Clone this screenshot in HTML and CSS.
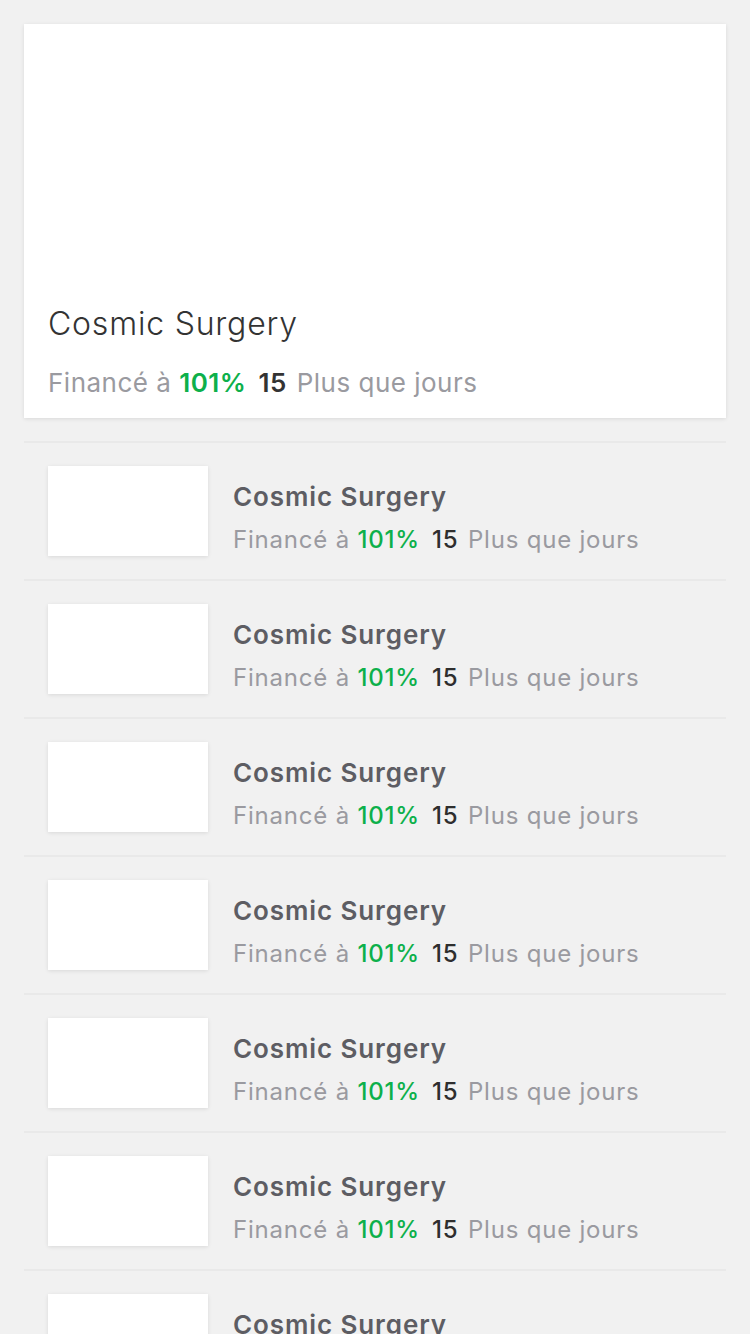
FILE: index.html
```html
<!DOCTYPE html>
<html lang="fr">
<head>
<meta charset="utf-8">
<title>Projets</title>
<link rel="stylesheet" href="styles.css">
</head>
<body>
<main class="page">
  <article class="featured">
    <div class="featured-media"></div>
    <h1 class="featured-title">Cosmic Surgery</h1>
    <p class="meta featured-meta">Financé à <b class="pct">101%</b><b class="days">15</b> Plus que jours</p>
  </article>
  <ul class="list">
    <li class="row"><div class="thumb"></div><div class="info"><h2 class="row-title">Cosmic Surgery</h2><p class="meta">Financé à <b class="pct">101%</b><b class="days">15</b> Plus que jours</p></div></li>
    <li class="row"><div class="thumb"></div><div class="info"><h2 class="row-title">Cosmic Surgery</h2><p class="meta">Financé à <b class="pct">101%</b><b class="days">15</b> Plus que jours</p></div></li>
    <li class="row"><div class="thumb"></div><div class="info"><h2 class="row-title">Cosmic Surgery</h2><p class="meta">Financé à <b class="pct">101%</b><b class="days">15</b> Plus que jours</p></div></li>
    <li class="row"><div class="thumb"></div><div class="info"><h2 class="row-title">Cosmic Surgery</h2><p class="meta">Financé à <b class="pct">101%</b><b class="days">15</b> Plus que jours</p></div></li>
    <li class="row"><div class="thumb"></div><div class="info"><h2 class="row-title">Cosmic Surgery</h2><p class="meta">Financé à <b class="pct">101%</b><b class="days">15</b> Plus que jours</p></div></li>
    <li class="row"><div class="thumb"></div><div class="info"><h2 class="row-title">Cosmic Surgery</h2><p class="meta">Financé à <b class="pct">101%</b><b class="days">15</b> Plus que jours</p></div></li>
    <li class="row"><div class="thumb"></div><div class="info"><h2 class="row-title">Cosmic Surgery</h2><p class="meta">Financé à <b class="pct">101%</b><b class="days">15</b> Plus que jours</p></div></li>
  </ul>
</main>
</body>
</html>
```

FILE: styles.css
```css
* { box-sizing: border-box; }
html, body { margin: 0; padding: 0; }
body {
  background: #f1f1f1;
  font-family: Inter, "Noto Sans", "Liberation Sans", sans-serif;
  width: 750px;
  height: 1334px;
  overflow: hidden;
}
.page { padding: 24px 24px 0; }

.featured {
  background: #fff;
  box-shadow: 0 1px 4px rgba(0,0,0,0.10);
  padding: 0 24px 18px;
}
.featured-media { height: 280px; }
.featured-title {
  margin: 0;
  font-size: 32px;
  line-height: 40px;
  font-weight: 300;
  letter-spacing: 0.8px;
  color: #333;
}
.meta {
  margin: 0;
  color: #9a9aa0;
  font-size: 24px;
  line-height: 32px;
  letter-spacing: 0.8px;
  white-space: nowrap;
}
.featured-meta {
  margin-top: 22px;
  font-size: 26px;
  line-height: 34px;
  letter-spacing: 0.5px;
}
.pct { color: #0db04b; font-weight: 600; }
.days { color: #333; font-weight: 600; margin-left: 12px; margin-right: 2px; }
.info .pct { font-weight: 500; }
.info .days { font-weight: 500; color: #2e2e2e; }

.list { list-style: none; margin: 23px 0 0; padding: 0; }
.row {
  display: flex;
  align-items: flex-start;
  gap: 25px;
  border-top: 2px solid #e9e9e9;
  padding: 23px 24px;
}
.thumb {
  flex: 0 0 160px;
  height: 90px;
  background: #fff;
  box-shadow: 0 1px 4px rgba(0,0,0,0.10);
}
.info { padding-top: 15px; }
.row-title {
  margin: 0 0 11px;
  font-size: 26px;
  line-height: 32px;
  font-weight: 600;
  letter-spacing: 0.9px;
  color: #5d5d63;
}
```
